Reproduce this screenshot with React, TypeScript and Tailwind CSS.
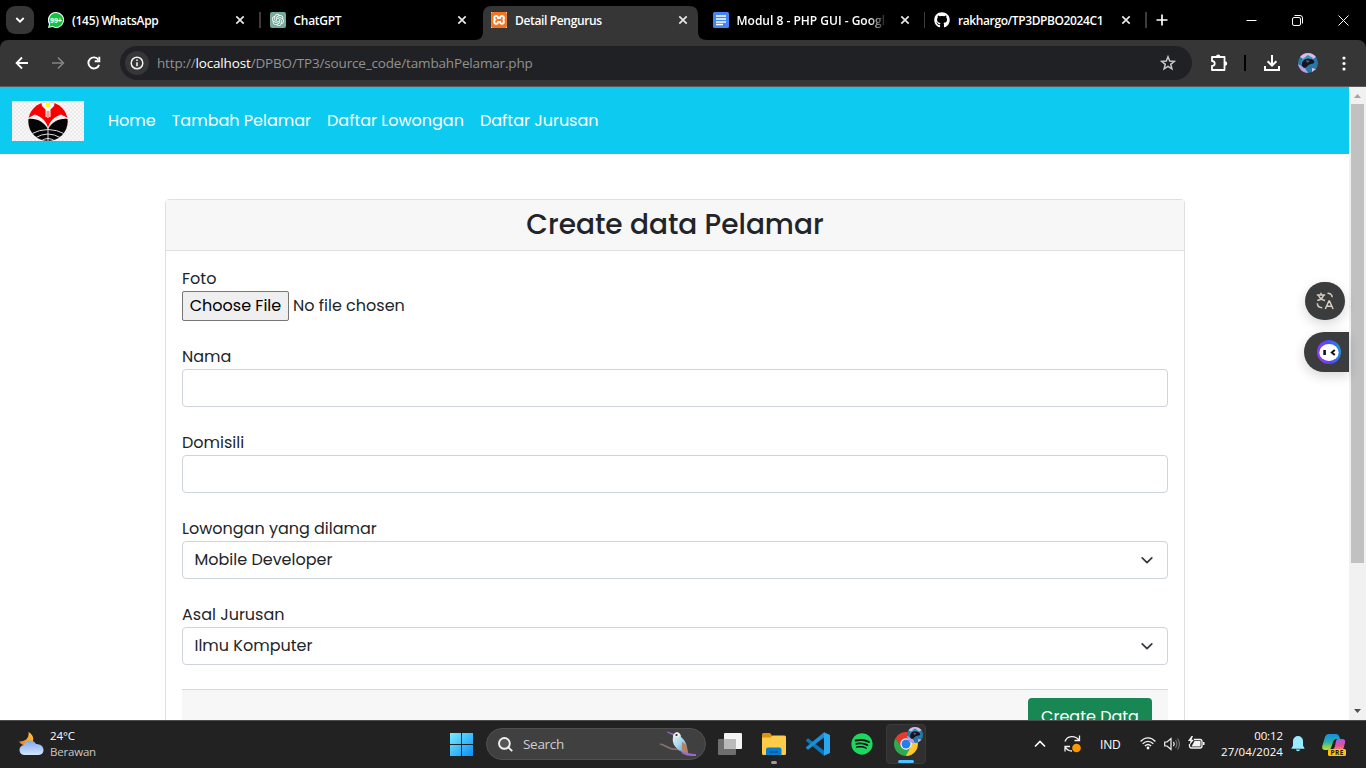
import React from "react";
import { FaGithub, FaSpotify } from "react-icons/fa";
import { SiXampp, SiOpenai } from "react-icons/si";

const ui = "font-['Open_Sans','Noto_Sans',sans-serif]";

function Close() {
  return (
    <svg width="16" height="16" viewBox="0 0 16 16" fill="none" stroke="#e8e8e8" strokeWidth="1.7">
      <path d="M4.3 4.3l7.4 7.4M11.7 4.3l-7.4 7.4" />
    </svg>
  );
}

function Tab({ icon, title, active, sep, tracking }: { icon: React.ReactNode; title: string; active?: boolean; sep?: boolean; tracking: string }) {
  return (
    <div className="relative flex h-10 w-[221.5px] shrink-0 items-center pl-[10px]">
      {active && (
        <svg className="absolute -left-[6px] top-[6px]" width="232" height="34" viewBox="0 0 232 34">
          <path d="M0 34C5 34 8 31 8 26V9C8 3 11 0 17 0H214C220 0 223 3 223 9V26C223 31 226 34 232 34Z" fill="#363636" />
        </svg>
      )}
      <span className="relative flex h-4 w-4 shrink-0">{icon}</span>
      <span className={`relative ml-2 mt-px w-[150px] overflow-hidden whitespace-nowrap text-[12px] font-semibold leading-5 text-white ${tracking} ${title.startsWith("Modul") ? "[mask-image:linear-gradient(to_right,black_132px,transparent_150px)]" : ""}`}>{title}</span>
      <span className="relative ml-[10px]"><Close /></span>
      {sep && <span className="absolute -right-px top-3 h-4 w-[1.5px] bg-[#3c3c3c]" />}
    </div>
  );
}

function WhatsAppIcon() {
  return (
    <svg width="16" height="16" viewBox="0 0 16 16">
      <path d="M8 0a8 8 0 1 1-3.6 15.1L0 16l1-4A8 8 0 0 1 8 0Z" fill="#f4fff6" />
      <path d="M8 1a7 7 0 1 1-3.4 13.1L1.4 14.7l.8-3A7 7 0 0 1 8 1Z" fill="#12c43e" />
      <text x="8" y="11" textAnchor="middle" fontSize="8" fontWeight="700" fontFamily="Liberation Sans" fill="#fff" textLength="12" lengthAdjust="spacingAndGlyphs">99+</text>
    </svg>
  );
}

function Avatar({ size }: { size: number }) {
  return (
    <svg width={size} height={size} viewBox="0 0 20 20">
      <circle cx="10" cy="10" r="10" fill="#2878a5" />
      <path d="M2 4A10 10 0 0 1 18 4L15 6 10 2 5 6Z" fill="#dcb8ed" />
      <path d="M0 11C1 16 5 20 10 20L7 15Z" fill="#b8a3e2" />
      <path d="M3 10C4 4 11 2 15 5L12 6C8 4 5 8 5 13Z" fill="#25a8be" />
      <path d="M4 13C3 7 8 4 13 6c4 1 5 5 0 5-3 0-4 4-7 4Z" fill="#15141f" />
      <path d="M8 7l4 1-3 2Z" fill="#665a78" />
      <path d="M14 15l4 1-4 3Z" fill="#dcb8ed" />
    </svg>
  );
}

function TabStrip() {
  return (
    <div className="flex h-10 shrink-0 bg-black">
      <div className="flex w-[38px] shrink-0 items-start pl-[6px] pt-[6px]">
        <span className="flex h-7 w-7 items-center justify-center rounded-[9px] bg-[#363636]">
          <svg width="10" height="8" viewBox="0 0 10 8" fill="none" stroke="#fff" strokeWidth="1.8"><path d="M1.3 2l3.7 3.7L8.7 2" /></svg>
        </span>
      </div>
      <Tab icon={<WhatsAppIcon />} title="(145) WhatsApp" sep tracking="tracking-[-0.3px]" />
      <Tab icon={<span className="flex h-4 w-4 items-center justify-center rounded-[2px] bg-[#74aa9c] text-[12px] text-white"><SiOpenai /></span>} title="ChatGPT" tracking="tracking-[-0.3px]" />
      <Tab active icon={<span className="flex h-4 w-4 bg-white text-[16px] text-[#f37623]"><SiXampp /></span>} title="Detail Pengurus" tracking="tracking-[-0.35px]" />
      <Tab
        icon={<svg width="16" height="16"><rect width="16" height="16" rx="1.5" fill="#4285f4" /><path d="M3 3.900h10M3 6.900h10M3 9.900h10M3 12.500h7" stroke="#fff" strokeWidth="1.5" /></svg>}
        title="Modul 8 - PHP GUI - Google" sep tracking="tracking-[0px]"
      />
      <Tab icon={<FaGithub size={16} color="#fff" />} title="rakhargo/TP3DPBO2024C1" sep tracking="tracking-[-0.4px]" />
      <div className="flex w-[82px] shrink-0 items-center pl-[10px]">
        <svg width="12" height="12" viewBox="0 0 12 12" stroke="#fff" strokeWidth="1.7"><path d="M6 .5v11M.5 6h11" /></svg>
      </div>
      <div className="flex flex-1 items-center justify-between pl-[18px] pr-[17px]">
        <svg width="11" height="11" viewBox="0 0 11 11" stroke="#fff"><path d="M.5 5.5h10" /></svg>
        <svg width="11" height="11" viewBox="0 0 11 11" fill="none" stroke="#fff"><rect x=".5" y="2.5" width="8" height="8" rx="1.5" /><path d="M2.5 .5H8a2.500 2.500 0 0 1 2.500 2.500v5.500" /></svg>
        <svg width="11" height="11" viewBox="0 0 11 11" stroke="#fff"><path d="M.5 .5l10 10M10.5 .5l-10 10" /></svg>
      </div>
    </div>
  );
}

function Toolbar() {
  return (
    <div className="bg-black">
      <div className="flex h-[47px] items-center rounded-t-lg border-b border-[#5c5c5c] bg-[#363636] pl-[15px]">
        <svg width="14" height="14" viewBox="0 0 14 14" fill="none" stroke="#fff" strokeWidth="1.8"><path d="M13 7H2M7 1.5L1.6 7 7 12.5" /></svg>
        <svg className="ml-[22px]" width="14" height="14" viewBox="0 0 14 14" fill="none" stroke="#858585" strokeWidth="1.6"><path d="M1 7h11M7 1.5L12.4 7 7 12.5" /></svg>
        <svg className="ml-[22px]" width="14" height="14" viewBox="0 0 14 14" fill="none" stroke="#fff" strokeWidth="1.9"><path d="M12.1 8.8A5.5 5.5 0 1 1 11.4 3.7" /><path d="M12.3 .7v4.6H7.7" /></svg>
        <div className="ml-[19px] flex h-[34px] w-[1072px] items-center rounded-full bg-[#202124] pl-[5px]">
          <span className="flex h-6 w-6 items-center justify-center rounded-full bg-[#363636]">
            <svg width="14" height="14" viewBox="0 0 14 14" fill="none" stroke="#f0f0f0" strokeWidth="1.5"><circle cx="7" cy="7" r="5.8" /><path d="M7 6.2v4M7 3.5v1.6" strokeWidth="1.6" /></svg>
          </span>
          <span className="ml-2 whitespace-nowrap text-[13.5px] tracking-[-0.16px] text-[#929292]">http://<span className="text-white">localhost</span>/DPBO/TP3/source_code/tambahPelamar.php</span>
          <svg className="ml-auto mr-4" width="16" height="16" viewBox="0 0 16 16" fill="none" stroke="#c7c7c7" strokeWidth="1.5"><path d="M8 1.800l1.700 4.300 4.600.3-3.600 2.900 1.200 4.500L8 11.300l-3.900 2.500 1.200-4.500L1.700 6.400l4.600-.3Z" /></svg>
        </div>
        <svg className="ml-[18px]" width="18" height="18" viewBox="0 0 18 18" fill="none" stroke="#fff" strokeWidth="1.8"><path d="M2 3h12.500v13H2v-4.200c3.600 0 3.600-4.800 0-4.800Z" strokeLinejoin="round" /><path d="M6 2.600a2.200 2.200 0 0 1 4.400 0ZM15 7.300a2.200 2.200 0 0 1 0 4.400Z" fill="#fff" stroke="none" /></svg>
        <span className="ml-[16px] h-4 w-[2px] bg-black" />
        <svg className="ml-[18px]" width="16" height="16" viewBox="0 0 16 16" fill="none" stroke="#fff" strokeWidth="2"><path d="M8 0v10.3M3.6 6.2L8 10.5l4.400-4.300M1 11v4h14v-4" /></svg>
        <span className="ml-[18px]"><Avatar size={20} /></span>
        <svg className="ml-[24px]" width="4" height="15" viewBox="0 0 4 15" fill="#fff"><circle cx="2" cy="2" r="1.6" /><circle cx="2" cy="7.5" r="1.6" /><circle cx="2" cy="13" r="1.6" /></svg>
      </div>
    </div>
  );
}

function Logo() {
  return (
    <svg width="72" height="40" viewBox="0 0 72 40">
      <defs>
        <pattern id="dots" width="4" height="4" patternUnits="userSpaceOnUse"><rect width="4" height="4" fill="#f7f7f7" /><rect width="2" height="2" fill="#ececec" /><rect x="2" y="2" width="2" height="2" fill="#ececec" /></pattern>
        <clipPath id="disc"><ellipse cx="36" cy="20.5" rx="19.7" ry="19.5" /></clipPath>
      </defs>
      <rect width="72" height="40" fill="url(#dots)" />
      <g clipPath="url(#disc)">
        <path d="M16 0H56V17L49 13.500C42 16 38 20 36 26.500C34 20 30 16 23 13.500L16 17Z" fill="#f80000" />
        <path d="M29 0H43L42 5 38.500 8.500V16H37.200V10H36.600V17H35.400V10H34.800V16H33.500V8.500L30 5Z" fill="#f8f8f8" />
        <circle cx="36" cy="4" r="2.400" fill="#ff0" />
        <path d="M16 18C25 17 32 21 36 28C40 21 47 17 56 18V40H16Z" fill="#050505" />
        <path d="M19 33Q36 24 53 33M23 37Q36 29 49 37M29 40Q36 35 43 40M36 27V40" fill="none" stroke="#f4f4f4" strokeWidth=".9" />
      </g>
    </svg>
  );
}

function Select({ value }: { value: string }) {
  return (
    <div className="flex h-[38px] items-center justify-between rounded-[4px] border border-[#ced4da] bg-white pl-[11.5px] pr-[13px]">
      <span>{value}</span>
      <svg width="14" height="14" viewBox="0 0 16 16" fill="none" stroke="#343a40" strokeWidth="2" strokeLinecap="round" strokeLinejoin="round"><path d="M2.500 5.500L8 11l5.500-5.500" /></svg>
    </div>
  );
}

function FloatingTools() {
  return (
    <div className="absolute right-[17px] top-[195px] flex w-[45px] flex-col gap-3">
      <div className="ml-px flex h-[38px] w-10 items-center justify-center rounded-full bg-[#3b3c3d] shadow-[0_4px_12px_rgba(0,0,0,0.16)]">
        <svg width="18" height="18" viewBox="0 0 18 18" fill="none" stroke="#d8cdbf" strokeWidth="1.5"><path d="M.8 3h8.4M5 .8V3M7.5 3C7 5.5 4.5 7.8 1.3 8.5M2.5 3.2C3.5 5.8 6 7.8 9 8.5M11.5 1.2c3 0 4.5 1.3 4.7 4M1.3 11.3c.2 3 2 4.5 5 4.5M9.3 17l3.600-8h.6l3.600 8M10.700 14.300h5" /></svg>
      </div>
      <div className="flex h-10 items-center rounded-l-full bg-[#3b3c3d] pl-[13px] shadow-[0_4px_12px_rgba(0,0,0,0.16)]">
        <svg width="24" height="24" viewBox="0 0 24 24"><defs><linearGradient id="bot" x1="0" y1=".7" x2="1" y2=".5"><stop stopColor="#a337e6" /><stop offset=".5" stopColor="#5046ff" /><stop offset="1" stopColor="#208de0" /></linearGradient></defs><circle cx="12" cy="12" r="12" fill="url(#bot)" /><ellipse cx="12" cy="12.5" rx="9.7" ry="8.5" fill="#fff" /><path d="M7.6 10v5" stroke="#111" strokeWidth="2.6" /><path d="M17.8 10l-3 2.500 3 2.500" fill="none" stroke="#111" strokeWidth="2" /></svg>
      </div>
    </div>
  );
}

function Page() {
  return (
    <div className="relative flex h-[633px] overflow-hidden bg-white font-['Poppins','Inter',sans-serif] text-[16px] leading-6 text-[#212529]">
      <div className="h-full flex-1 overflow-hidden">
        <nav className="flex h-[67px] items-center bg-[#0dcaf0] pl-3 text-white">
          <span className="mt-px"><Logo /></span>
          <div className="ml-6 flex gap-4 whitespace-nowrap">
            <span>Home</span>
            <span>Tambah Pelamar</span>
            <span>Daftar Lowongan</span>
            <span>Daftar Jurusan</span>
          </div>
        </nav>
        <main className="ml-[165px] mt-[45px] w-[1020px] rounded-[4px] border border-[#dfdfdf]">
          <h3 className="flex h-[51px] items-center justify-center border-b border-[#dfdfdf] bg-[#f7f7f7] pb-px text-[28px] font-medium">Create data Pelamar</h3>
          <form className="flex flex-col p-4">
            <label>Foto</label>
            <div className="flex h-[30px] items-center">
              <button type="button" className="flex h-[30px] w-[107px] items-center justify-center whitespace-nowrap rounded-[2px] border border-[#767676] bg-[#efefef] text-black">Choose File</button>
              <span className="ml-1">No file chosen</span>
            </div>
            <label className="mt-6">Nama</label>
            <div className="h-[38px] rounded-[4px] border border-[#ced4da]" />
            <label className="mt-6">Domisili</label>
            <div className="h-[38px] rounded-[4px] border border-[#ced4da]" />
            <label className="mt-6">Lowongan yang dilamar</label>
            <Select value="Mobile Developer" />
            <label className="mt-6">Asal Jurusan</label>
            <Select value="Ilmu Komputer" />
            <div className="mt-6 flex justify-end border-t border-[#d9d9d9] bg-[#f7f7f7] px-4 py-2">
              <button type="button" className="h-[38px] w-[124px] whitespace-nowrap rounded-[4px] bg-[#198754] text-white">Create Data</button>
            </div>
          </form>
        </main>
      </div>
      <div className="flex w-[17px] flex-col items-center bg-[#f1f1f1]">
        <svg className="my-[5px] shrink-0" width="9" height="7"><path d="M1 6l3.500-4L8 6Z" fill="#a3a3a3" /></svg>
        <div className="h-[459px] w-[13px] bg-[#c1c1c1]" />
        <svg className="mb-[6px] mt-auto" width="9" height="7"><path d="M1 2h7L4.500 6Z" fill="#505050" /></svg>
      </div>
      <FloatingTools />
    </div>
  );
}

function WeatherIcon() {
  return (
    <svg className="mb-[2px]" width="25" height="24" viewBox="0 0 25 24">
      <defs><linearGradient id="cl" x2="0" y2="1"><stop stopColor="#7da7ed" /><stop offset="1" stopColor="#d4e5fd" /></linearGradient><linearGradient id="mn" x1="1" x2="0" y2="1"><stop stopColor="#ffc83d" /><stop offset="1" stopColor="#f07b16" /></linearGradient></defs>
      <path d="M9.500 0C10.500 6 6 10 0 9.500C3 14 10 16 14 9C15 5 13 2 9.500 0Z" fill="url(#mn)" />
      <path d="M6 23a5 5 0 0 1-1-10 6.500 6.500 0 0 1 12-1c4 0 7.500 2 7.500 6s-3 5-6 5Z" fill="url(#cl)" />
    </svg>
  );
}

function Bird() {
  return (
    <svg width="38" height="26" viewBox="0 0 38 26">
      <defs><linearGradient id="bd" x2="1" y2="1"><stop stopColor="#edf5fc" /><stop offset=".5" stopColor="#a6d7ed" /><stop offset="1" stopColor="#5382d0" /></linearGradient></defs>
      <path d="M1 13C8 14 9 19 16 18C22 18 26 24 37 24" fill="none" stroke="#88716c" strokeWidth="1.7" />
      <path d="M23 21C28 25 32 24 37 24" stroke="#9b68d3" strokeWidth="2" fill="none" />
      <path d="M8 1l8 4-1-2Z" fill="#9b68d3" stroke="#9b68d3" strokeWidth=".6" />
      <path d="M14 6C14 0 22 0 22 6C26 9 29 14 28 22C22 21 12 16 14 6Z" fill="url(#bd)" />
      <path d="M14.500 5c1-5 6-5 7 0l-4 1Z" fill="#f6eee2" />
      <path d="M23 11c4 2 6 6 6 12l-6-4Z" fill="#b98060" />
      <circle cx="17.500" cy="4" r="1.100" fill="#222" />
    </svg>
  );
}

function VsCode() {
  return (
    <svg width="24" height="24" viewBox="0 0 24 24">
      <path d="M2 6.2L18 18.5v5.2L.5 9.2c-.6-.5-.6-1.2 0-1.7Z" fill="#0a77bb" />
      <path d="M2 17.8L18 5.5V.3L.5 14.8c-.6.5-.6 1.2 0 1.700Z" fill="#1a8fd6" />
      <path d="M18 .2L24 3v18l-6 2.800Z" fill="#2ba7f2" />
    </svg>
  );
}

function Chrome() {
  return (
    <svg width="24" height="24" viewBox="0 0 24 24">
      <path d="M12 6.500H22.600A12 12 0 0 1 12 24L12 12Z" fill="#fcc934" />
      <path d="M1.600 6A12 12 0 0 1 22.400 6L22.700 6.600H12L7 15Z" fill="#e33b2e" />
      <path d="M1.600 6L7.300 15 12 17.500 16.700 15 11.800 24A12 12 0 0 1 1.600 6Z" fill="#2fa84f" />
      <circle cx="12" cy="12" r="5.700" fill="#fff" /><circle cx="12" cy="12" r="4.500" fill="#267cf0" />
    </svg>
  );
}

function Taskbar() {
  return (
    <div className="flex h-12 items-center border-t border-[#4b4b4b] bg-[#222222] pl-[19px] text-white">
      <WeatherIcon />
      <div className="mb-[2px] ml-[6px] w-[399px] text-[11.5px] leading-4"><div className="tracking-[-0.1px]">24°C</div><div className="tracking-[-0.2px] text-[#c8c8c8]">Berawan</div></div>
      <svg className="ml-px mt-px" width="24" height="24"><defs><linearGradient id="win" x2="1" y2="1"><stop stopColor="#76edff" /><stop offset="1" stopColor="#0b8ff5" /></linearGradient></defs><path d="M0 0H11V11H0ZM12 0H23V11H12ZM0 12H11V23H0ZM12 12H23V23H12Z" fill="url(#win)" /></svg>
      <div className="mb-px ml-[12px] flex h-8 w-[220px] shrink-0 items-center rounded-full border border-[#505050] bg-[#404040] pl-[11px]">
        <svg width="15" height="15" viewBox="0 0 15 15" fill="#555" stroke="#f0f0f0" strokeWidth="1.9"><circle cx="6.4" cy="6.4" r="5.4" /><path d="M10.4 10.4l3.800 3.800" /></svg>
        <span className="ml-[10px] text-[13.5px] tracking-[-0.3px] text-[#cfcfcf]">Search</span>
        <span className="ml-auto mr-[8px]"><Bird /></span>
      </div>
      <svg className="mb-px ml-3 shrink-0" width="24" height="24"><rect x="6" y="1" width="18" height="16" rx="1" fill="#f3f3f3" /><rect y="7" width="18" height="16" rx="1" fill="#6f6f6f" /><rect x="6" y="7" width="12" height="10" fill="#bababa" /></svg>
      <div className="relative mb-[2px] ml-5 shrink-0">
        <svg width="24" height="24"><path d="M0 2.5Q0 1 1.5 1H8l2 2.500V8H0Z" fill="#d99413" /><path d="M0 5.500H8.500L10.500 3.500H22.500Q24 3.500 24 5V21.500Q24 23 22.500 23H1.500Q0 23 0 21.500Z" fill="#fdcc48" /><path d="M4 23V17.500Q4 15.500 6 15.500H17.500Q19.500 15.500 19.500 17.500V23Z" fill="#087bcd" /><path d="M7.500 20H16" stroke="#045497" strokeWidth="1.500" /></svg>
        <span className="absolute -bottom-[8px] left-[9px] h-[3px] w-[6px] rounded-full bg-[#9a9a9a]" />
      </div>
      <span className="mb-px ml-5 shrink-0"><VsCode /></span>
      <span className="mb-[2px] ml-[21px] flex h-[22px] w-[22px] shrink-0 rounded-full bg-[#111] text-[22px] text-[#1ed760]"><FaSpotify /></span>
      <div className="relative mb-[2px] ml-[13px] flex h-10 w-10 shrink-0 items-center justify-center rounded-[4px] border border-[#3a3a3a] bg-[#303030]">
        <Chrome />
        <span className="absolute right-[2px] top-[2px] flex"><Avatar size={16} /></span>
        <span className="absolute bottom-0 left-[11px] h-[3px] w-4 rounded-full bg-[#4cc2ff]" />
      </div>
      <svg className="mb-px ml-[108px] shrink-0" width="12" height="8" viewBox="0 0 12 8" fill="none" stroke="#fff" strokeWidth="1.6"><path d="M1 6.500l5-5 5 5" /></svg>
      <svg className="mb-px ml-[18px] shrink-0" width="17" height="18" viewBox="0 0 17 18" fill="none" stroke="#f3f3f3" strokeWidth="1.300"><path d="M1 6.500C3 .5 11 0 15 5M15.500 .5V5.500H10.500M8 16C4.500 16 2.500 14.500 1 11.500M1 16.500V11.500H6" /><circle cx="12.500" cy="13" r="4.300" fill="#ff9800" stroke="none" /></svg>
      <span className="ml-[19px] w-[22px] text-[12px] tracking-[-0.2px]">IND</span>
      <svg className="mb-[2px] ml-[18px] shrink-0" width="16" height="13" viewBox="0 0 16 13" fill="none" stroke="#f3f3f3" strokeWidth="1.300"><path d="M.6 4.500C5-.3 11-.3 15.400 4.500M2.700 6.800C6 3.500 10 3.500 13.300 6.800M4.900 9C6.800 7.200 9.200 7.200 11.100 9" /><circle cx="8" cy="11" r="1.400" fill="#f3f3f3" stroke="none" /></svg>
      <svg className="mb-[2px] ml-[8px] shrink-0" width="17" height="14" viewBox="0 0 17 14" fill="none" stroke="#f3f3f3" strokeWidth="1.200"><path d="M.7 5v4H3l4 3.500V1.500L3 5ZM9.500 4.800Q11 7 9.500 9.200" /><path d="M11.500 3Q14.300 7 11.500 11M13.500 1.500Q17.500 7 13.500 12.500" stroke="#707070" /></svg>
      <svg className="mb-[4px] ml-[7px] shrink-0" width="17" height="14" viewBox="0 0 17 14"><path d="M6 3.500H12Q14 3.500 14 5.500V10Q14 12 12 12H3.500Q1.500 12 1.500 10V8" fill="none" stroke="#f3f3f3" strokeWidth="1.300" /><path d="M6.500 5H12.500V10.500H3.500Z" fill="#f3f3f3" /><path d="M15 6h1.500v3H15Z" fill="#f3f3f3" /><path d="M3.500 0L0 5H2.500L1.500 9 6 3.700H3.500L5 0Z" fill="#f3f3f3" /></svg>
      <div className="mb-[2px] ml-[13px] flex w-[65px] flex-col items-end text-[11.500px] leading-4"><div className="tracking-[-0.1px]">00:12</div><div className="whitespace-nowrap tracking-[0.1px]">27/04/2024</div></div>
      <svg className="mb-px ml-[8px] shrink-0" width="14" height="16" viewBox="0 0 14 16" fill="#99ebff"><path d="M7 0a5 5 0 0 1 5 5v4.500l1.700 3.200H.3L2 9.500V5A5 5 0 0 1 7 0ZM4.800 13.500H9.200A2.300 2.300 0 0 1 4.800 13.500Z" /></svg>
      <svg className="ml-[17px] shrink-0" width="24" height="24" viewBox="0 0 24 24">
        <defs><linearGradient id="cpa" x2="0" y2="1"><stop stopColor="#178bea" /><stop offset=".5" stopColor="#27b4a3" /><stop offset="1" stopColor="#cfdc28" /></linearGradient><linearGradient id="cpb" x2="0" y2="1"><stop stopColor="#a45be9" /><stop offset=".6" stopColor="#e55396" /><stop offset="1" stopColor="#f88b55" /></linearGradient></defs>
        <path d="M7 1H14Q17 1 18 6H14Q12 6 11 9L9 15Q8 17 5 17H3Q-.5 17 .3 13L3 4Q4 1 7 1Z" fill="url(#cpa)" />
        <path d="M16 6H20Q24 6 23 10L21 17H9Q12 17 13 13L14 8Q14.500 6 16 6Z" fill="url(#cpb)" />
        <rect x="6" y="16" width="18" height="7" rx="1.500" fill="#ffc20d" />
        <text x="15" y="22" fontSize="6.500" fontWeight="700" fontFamily="Open Sans" textAnchor="middle" fill="#251c00" textLength="13">PRE</text>
      </svg>
    </div>
  );
}

export default function App() {
  return (
    <div className={`flex h-[768px] w-[1366px] flex-col overflow-hidden bg-white ${ui}`}>
      <TabStrip />
      <Toolbar />
      <Page />
      <Taskbar />
    </div>
  );
}
